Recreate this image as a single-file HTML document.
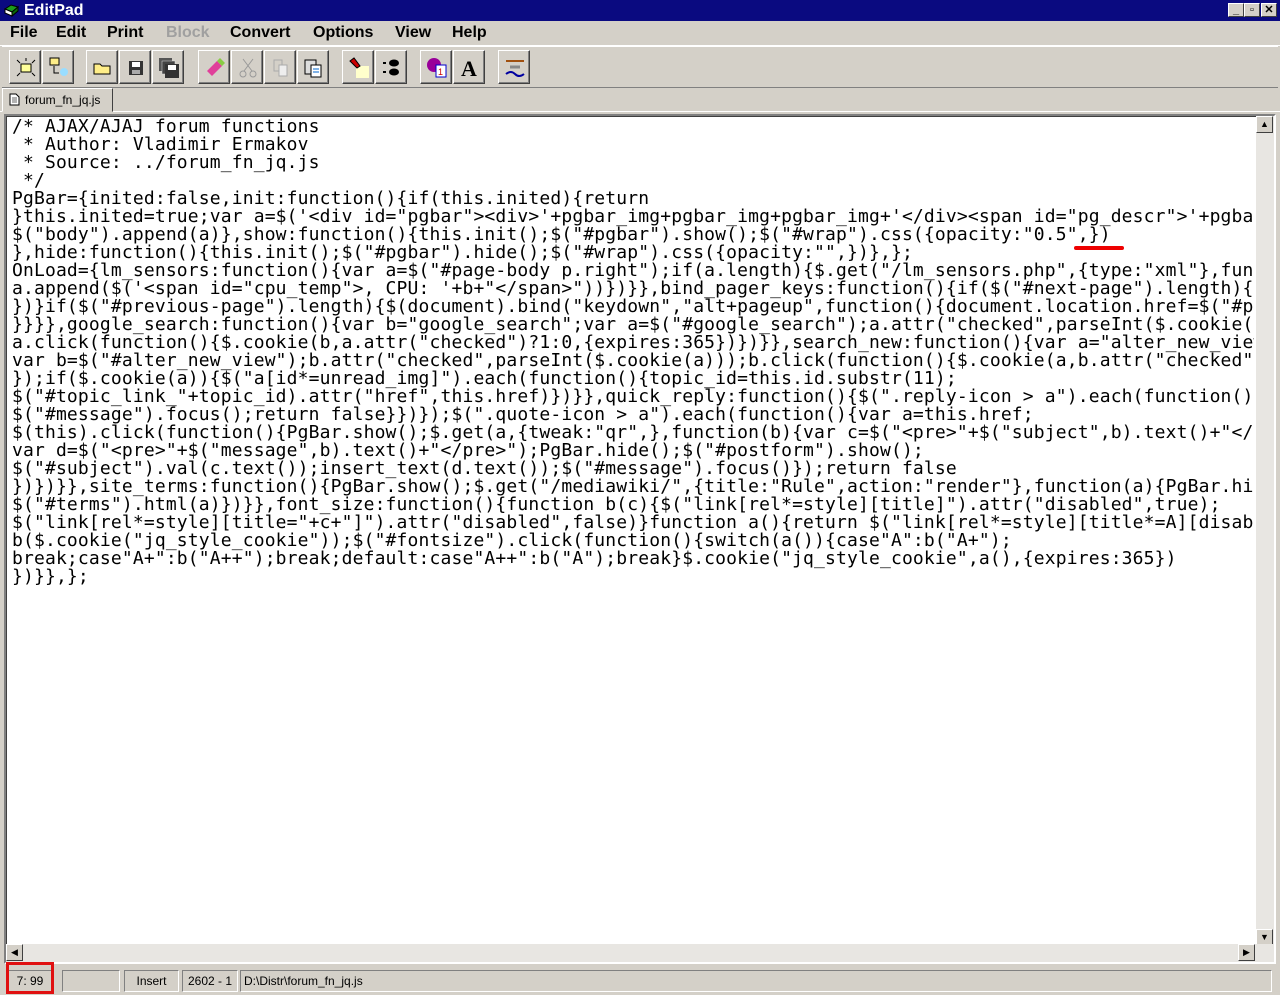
<!DOCTYPE html>
<html><head><meta charset="utf-8"><style>
*{margin:0;padding:0;box-sizing:border-box}
body{width:1280px;height:995px;background:#d4d0c8;position:relative;overflow:hidden;font-family:"Liberation Sans",sans-serif}
.title{position:absolute;left:0;top:0;width:1280px;height:21px;background:#0a0a80;color:#fff;font-weight:bold;font-size:16px;line-height:21px;padding-left:24px}
.wb{position:absolute;top:3px;width:16px;height:14px;background:#d4d0c8;border:1px solid;border-color:#fff #404040 #404040 #fff;color:#000;font-size:11px;line-height:12px;text-align:center;font-weight:bold}
.menu{position:absolute;top:22px;left:0;height:22px;font-size:16px;line-height:22px;font-weight:bold}
.menu span{position:absolute;top:0;white-space:nowrap}
.tb{position:absolute;top:46px;left:2px;width:1276px;height:42px;border-top:1px solid #fff;border-bottom:1px solid #808080}
.btn{position:absolute;top:50px;width:32px;height:34px;border:1px solid;border-color:#fff #404040 #404040 #fff;box-shadow:inset -1px -1px 0 #808080}
.btn svg{position:absolute;left:5px;top:6px}
.tab{position:absolute;left:2px;top:88px;width:111px;height:24px;border:1px solid;border-color:#fff #404040 #d4d0c8 #fff;font-size:12px;line-height:22px;padding-left:22px}
.edit{position:absolute;left:4px;top:114px;width:1272px;height:850px;border:2px solid;border-color:#808080 #fff #fff #808080;box-shadow:inset 1px 1px 0 #404040;background:#fff}
pre{position:absolute;left:6px;top:2px;width:1242px;height:826px;overflow:hidden;font-family:"DejaVu Sans Mono","Liberation Mono",monospace;font-size:18px;line-height:18px;letter-spacing:0.15px;color:#000}
.vs{position:absolute;right:0;top:0;width:18px;height:830px;background:#e8e6e2}
.hs{position:absolute;left:0;bottom:0;width:1268px;height:18px;background:#e8e6e2}
.sb{position:absolute;width:17px;height:17px;background:#d4d0c8;border:1px solid;border-color:#fff #404040 #404040 #fff;font-size:9px;line-height:15px;text-align:center;color:#000}
.st{position:absolute;top:970px;height:22px;border:1px solid;border-color:#808080 #fff #fff #808080;font-size:12px;line-height:20px;text-align:center}
</style></head><body>
<div class="title"><svg style="position:absolute;left:3px;top:3px" width="16" height="15"><path d="M2 6 L8 2 L15 4 L9 9Z" fill="#1c9c1c" stroke="#000" stroke-width="1"/><path d="M2 6 L9 9 L9 13 L2 10Z" fill="#fff" stroke="#000"/><path d="M9 9 L15 4 L15 8 L9 13Z" fill="#0a6a0a" stroke="#000"/></svg>EditPad</div>
<div class="wb" style="left:1228px">_</div><div class="wb" style="left:1244px">▫</div><div class="wb" style="left:1261px">✕</div>
<div class="menu"><span style="left:10px">File</span><span style="left:56px">Edit</span><span style="left:107px">Print</span><span style="left:166px;color:#a0a0a0">Block</span><span style="left:230px">Convert</span><span style="left:313px">Options</span><span style="left:395px">View</span><span style="left:452px">Help</span></div>
<div style="position:absolute;left:0;top:45px;width:1280px;height:1px;background:#fff"></div>
<div class="tb"></div>
<div class="btn" style="left:9px"><svg width="22" height="22"><rect x="6" y="7" width="10" height="8" fill="#ffff99" stroke="#000"/><path d="M2 3l3 3M20 3l-3 3M2 19l3-3M20 19l-3-3M11 1v3" stroke="#000"/></svg></div>
<div class="btn" style="left:42px"><svg width="22" height="22"><rect x="2" y="1" width="9" height="7" fill="#ffee88" stroke="#000"/><path d="M6 9v7h5" stroke="#000" fill="none"/><circle cx="16" cy="15" r="4" fill="#99ddff"/></svg></div>
<div class="btn" style="left:86px"><svg width="22" height="22"><path d="M2 7h6l2 2h8v8H2z" fill="#ffee88" stroke="#000"/></svg></div>
<div class="btn" style="left:119px"><svg width="22" height="22"><rect x="4" y="4" width="14" height="14" fill="#333"/><rect x="7" y="5" width="8" height="5" fill="#fff"/><rect x="7" y="13" width="8" height="4" fill="#aaa"/></svg></div>
<div class="btn" style="left:152px"><svg width="22" height="22"><rect x="1" y="1" width="13" height="13" fill="#555"/><rect x="4" y="4" width="13" height="13" fill="#444" stroke="#ddd" stroke-width=".5"/><rect x="7" y="7" width="14" height="14" fill="#333"/><rect x="10" y="8" width="8" height="5" fill="#fff"/></svg></div>
<div class="btn" style="left:198px"><svg width="22" height="22"><path d="M3 14l10-10 5 5-10 10z" fill="#e0409a"/><path d="M13 4l3-3 5 5-3 3z" fill="#8c4"/></svg></div>
<div class="btn" style="left:231px"><svg width="22" height="22"><path d="M6 2l9 12M16 2L7 14" stroke="#999"/><circle cx="6" cy="17" r="3" fill="none" stroke="#999"/><circle cx="16" cy="17" r="3" fill="none" stroke="#999"/></svg></div>
<div class="btn" style="left:264px"><svg width="22" height="22"><rect x="4" y="3" width="8" height="11" fill="none" stroke="#aaa"/><rect x="9" y="8" width="8" height="11" fill="#eee" stroke="#aaa"/></svg></div>
<div class="btn" style="left:297px"><svg width="22" height="22"><rect x="2" y="3" width="11" height="14" fill="#ddd" stroke="#000"/><rect x="8" y="8" width="10" height="12" fill="#fff" stroke="#000"/><path d="M10 12h6M10 15h6" stroke="#06c"/></svg></div>
<div class="btn" style="left:342px"><svg width="22" height="22"><rect x="8" y="9" width="13" height="12" fill="#ffffcc"/><path d="M2 4l4-3 6 8-3 2z" fill="#c00" stroke="#000"/></svg></div>
<div class="btn" style="left:375px"><svg width="22" height="22"><ellipse cx="13" cy="6" rx="5" ry="3.5"/><ellipse cx="13" cy="15" rx="5" ry="3.5"/><rect x="2" y="5" width="3" height="2"/><rect x="2" y="14" width="3" height="2"/></svg></div>
<div class="btn" style="left:420px"><svg width="22" height="22"><circle cx="8" cy="8" r="7" fill="#990099"/><rect x="10" y="8" width="10" height="12" fill="#fff" stroke="#00c"/><text x="12" y="18" font-size="9" fill="#c00" font-family="Liberation Sans">1</text></svg></div>
<div class="btn" style="left:453px"><svg width="22" height="22"><text x="2" y="19" font-size="22" font-weight="bold" font-family="Liberation Serif">A</text></svg></div>
<div class="btn" style="left:498px"><svg width="22" height="22"><path d="M2 4h18" stroke="#a05010" stroke-width="2"/><path d="M6 10h10" stroke="#888" stroke-width="3"/><path d="M2 17q5-4 9 0t9 0" stroke="#0000a0" stroke-width="2" fill="none"/></svg></div>
<div style="position:absolute;left:0;top:111px;width:1280px;height:1px;background:#fff"></div>
<div class="tab"><svg style="position:absolute;left:6px;top:4px" width="11" height="13"><path d="M1 1h6l3 3v8H1z" fill="#fff" stroke="#000"/><path d="M3 5h5M3 7h5M3 9h5" stroke="#666"/></svg>forum_fn_jq.js</div>
<div class="edit">
<pre>/* AJAX/AJAJ forum functions
 * Author: Vladimir Ermakov
 * Source: ../forum_fn_jq.js
 */
PgBar={inited:false,init:function(){if(this.inited){return
}this.inited=true;var a=$('&lt;div id="pgbar"&gt;&lt;div&gt;'+pgbar_img+pgbar_img+pgbar_img+'&lt;/div&gt;&lt;span id="pg_descr"&gt;'+pgbar_descr
$("body").append(a)},show:function(){this.init();$("#pgbar").show();$("#wrap").css({opacity:"0.5",})
},hide:function(){this.init();$("#pgbar").hide();$("#wrap").css({opacity:"",})},};
OnLoad={lm_sensors:function(){var a=$("#page-body p.right");if(a.length){$.get("/lm_sensors.php",{type:"xml"},function
a.append($('&lt;span id="cpu_temp"&gt;, CPU: '+b+"&lt;/span&gt;"))})}},bind_pager_keys:function(){if($("#next-page").length){
})}if($("#previous-page").length){$(document).bind("keydown","alt+pageup",function(){document.location.href=$("#prev
}}}},google_search:function(){var b="google_search";var a=$("#google_search");a.attr("checked",parseInt($.cookie(b
a.click(function(){$.cookie(b,a.attr("checked")?1:0,{expires:365})})}},search_new:function(){var a="alter_new_view";
var b=$("#alter_new_view");b.attr("checked",parseInt($.cookie(a)));b.click(function(){$.cookie(a,b.attr("checked")
});if($.cookie(a)){$("a[id*=unread_img]").each(function(){topic_id=this.id.substr(11);
$("#topic_link_"+topic_id).attr("href",this.href)})}},quick_reply:function(){$(".reply-icon &gt; a").each(function(){
$("#message").focus();return false}})});$(".quote-icon &gt; a").each(function(){var a=this.href;
$(this).click(function(){PgBar.show();$.get(a,{tweak:"qr",},function(b){var c=$("&lt;pre&gt;"+$("subject",b).text()+"&lt;/pre&gt;
var d=$("&lt;pre&gt;"+$("message",b).text()+"&lt;/pre&gt;");PgBar.hide();$("#postform").show();
$("#subject").val(c.text());insert_text(d.text());$("#message").focus()});return false
})})}},site_terms:function(){PgBar.show();$.get("/mediawiki/",{title:"Rule",action:"render"},function(a){PgBar.hide
$("#terms").html(a)})}},font_size:function(){function b(c){$("link[rel*=style][title]").attr("disabled",true);
$("link[rel*=style][title="+c+"]").attr("disabled",false)}function a(){return $("link[rel*=style][title*=A][disabled
b($.cookie("jq_style_cookie"));$("#fontsize").click(function(){switch(a()){case"A":b("A+");
break;case"A+":b("A++");break;default:case"A++":b("A");break}$.cookie("jq_style_cookie",a(),{expires:365})
})}},};</pre>
<div style="position:absolute;left:1068px;top:130px;width:50px;height:4px;background:#e00;border-radius:2px"></div>
<div class="vs"><div class="sb" style="left:0;top:0">▲</div><div class="sb" style="left:0;bottom:0">▼</div></div>
<div class="hs"><div class="sb" style="left:0;top:0">◀</div><div class="sb" style="left:1232px;top:0">▶</div></div>
</div>
<div class="st" style="left:8px;width:44px">7: 99</div>
<div style="position:absolute;left:6px;top:962px;width:48px;height:32px;border:3px solid #e01010"></div>
<div class="st" style="left:62px;width:58px"></div>
<div class="st" style="left:124px;width:55px">Insert</div>
<div class="st" style="left:182px;width:56px">2602 - 1</div>
<div class="st" style="left:240px;width:1032px;text-align:left;padding-left:3px">D:\Distr\forum_fn_jq.js</div>
</body></html>
